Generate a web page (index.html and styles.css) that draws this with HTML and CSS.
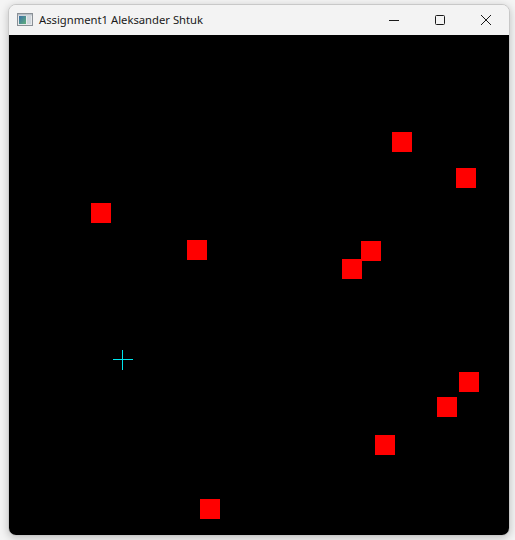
FILE: index.html
```html
<!DOCTYPE html>
<html>
<head>
<meta charset="utf-8">
<link rel="stylesheet" href="styles.css">
</head>
<body>
<div class="window">
  <div class="titlebar">
    <svg class="app-icon" width="16" height="14" viewBox="0 0 16 14">
      <rect x="0.5" y="0.5" width="15" height="12" fill="#e8eaec" stroke="#8a9096"/>
      <defs><linearGradient id="g" x1="0" y1="0" x2="1" y2="1"><stop offset="0" stop-color="#3a6ea8"/><stop offset="1" stop-color="#5fb07a"/></linearGradient></defs>
      <rect x="2" y="3" width="7" height="8" fill="url(#g)"/>
      <rect x="10" y="3" width="4" height="8" fill="#cfd6dc"/>
      <rect x="1" y="1" width="14" height="1.5" fill="#b8c0c8"/>
    </svg>
    <span class="title">Assignment1 Aleksander Shtuk</span>
    <div class="controls">
      <div class="btn"><svg width="10" height="10" viewBox="0 0 10 10"><line x1="0" y1="5.5" x2="10" y2="5.5" stroke="#1a1a1a" stroke-width="1"/></svg></div>
      <div class="btn"><svg width="10" height="10" viewBox="0 0 10 10"><rect x="0.5" y="0.5" width="9" height="9" rx="1" fill="none" stroke="#1a1a1a" stroke-width="1"/></svg></div>
      <div class="btn"><svg width="10" height="10" viewBox="0 0 10 10"><path d="M0 0L10 10M10 0L0 10" stroke="#1a1a1a" stroke-width="1"/></svg></div>
    </div>
  </div>
  <svg class="canvas" width="500" height="500" viewBox="0 0 500 500">
    <rect width="500" height="500" fill="#000"/>
    <g fill="#ff0000">
      <rect x="383" y="97" width="20" height="20"/>
      <rect x="447" y="133" width="20" height="20"/>
      <rect x="82" y="168" width="20" height="20"/>
      <rect x="178" y="205" width="20" height="20"/>
      <rect x="352" y="206" width="20" height="20"/>
      <rect x="333" y="224" width="20" height="20"/>
      <rect x="450" y="337" width="20" height="20"/>
      <rect x="428" y="362" width="20" height="20"/>
      <rect x="366" y="400" width="20" height="20"/>
      <rect x="191" y="464" width="20" height="20"/>
    </g>
    <g stroke="#00e5ee" stroke-width="1">
      <line x1="104" y1="324.5" x2="124" y2="324.5"/>
      <line x1="113.5" y1="315" x2="113.5" y2="335"/>
    </g>
  </svg>
</div>
</body>
</html>
```

FILE: styles.css
```css
html, body {
  margin: 0;
  padding: 0;
  background: #f4f4f4;
}
body {
  width: 515px;
  height: 540px;
  overflow: hidden;
}
.window {
  margin: 4px 0 0 8px;
  width: 500px;
  border: 1px solid #c8c8c8;
  border-radius: 8px;
  overflow: hidden;
  background: #f3f3f3;
  box-shadow: 0 2px 8px rgba(0,0,0,0.22);
}
.titlebar {
  height: 30px;
  display: flex;
  align-items: center;
  background: #f3f3f3;
  font-family: "Noto Sans", "Open Sans", sans-serif;
  font-size: 11.25px;
  color: #1a1a1a;
}
.app-icon {
  margin-left: 8px;
  margin-right: 6px;
  margin-top: -1px;
}
.title {
  flex: 1;
  margin-top: -1px;
}
.controls {
  display: flex;
  height: 30px;
}
.btn {
  width: 46px;
  height: 30px;
  display: flex;
  align-items: center;
  justify-content: center;
}
.canvas {
  display: block;
}
```
